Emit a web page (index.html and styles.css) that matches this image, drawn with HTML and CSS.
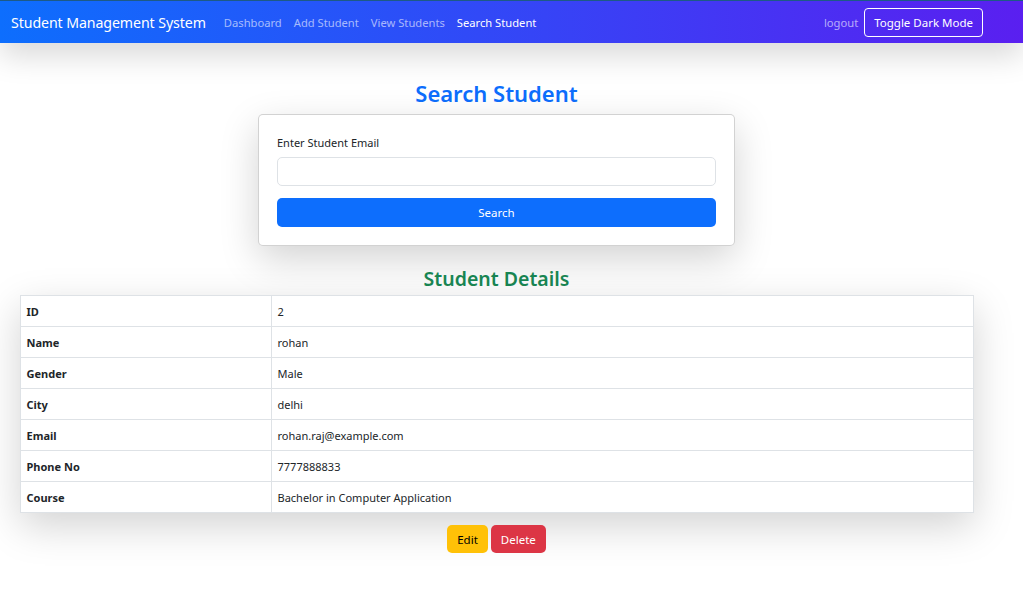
FILE: index.html
```html
<!DOCTYPE html>
<html lang="en">
<head>
<meta charset="utf-8">
<title>Search Student</title>
<link rel="stylesheet" href="styles.css">
</head>
<body>
<nav class="navbar">
  <div class="nav-left">
    <span class="brand">Student Management System</span>
    <ul class="nav-links">
      <li><a class="nav-link">Dashboard</a></li>
      <li><a class="nav-link">Add Student</a></li>
      <li><a class="nav-link">View Students</a></li>
      <li><a class="nav-link active">Search Student</a></li>
    </ul>
  </div>
  <div class="nav-right">
    <a class="nav-link">logout</a>
    <button class="btn-outline">Toggle Dark Mode</button>
  </div>
</nav>
<main class="container">
  <h2 class="title-blue">Search Student</h2>
  <div class="card search-card">
    <label class="label">Enter Student Email</label>
    <div class="input"></div>
    <button class="btn-primary">Search</button>
  </div>
  <h3 class="title-green">Student Details</h3>
  <table class="details">
    <tr><th>ID</th><td>2</td></tr>
    <tr><th>Name</th><td>rohan</td></tr>
    <tr><th>Gender</th><td>Male</td></tr>
    <tr><th>City</th><td>delhi</td></tr>
    <tr><th>Email</th><td>rohan.raj@example.com</td></tr>
    <tr><th>Phone No</th><td>7777888833</td></tr>
    <tr><th>Course</th><td>Bachelor in Computer Application</td></tr>
  </table>
  <div class="actions">
    <button class="btn btn-warning">Edit</button>
    <button class="btn btn-danger">Delete</button>
  </div>
</main>
</body>
</html>
```
FILE: styles.css
```css
* { box-sizing: border-box; }
html, body { min-height: 100%; }
body {
  margin: 0;
  font-family: "Noto Sans", "Open Sans", sans-serif;
  font-size: 11px;
  color: #212529;
  background: #fff;
}
.navbar {
  height: 43px;
  display: flex;
  align-items: center;
  justify-content: space-between;
  padding: 0 40px 0 11px;
  background: linear-gradient(90deg, #0d6efd 0%, #5a1ff0 100%);
  border-top: 1px solid #1d5a86;
  box-shadow: 0 13px 30px rgba(0,0,0,0.15);
  position: relative;
  z-index: 1;
}
.nav-left, .nav-right { display: flex; align-items: center; }
.brand {
  color: #fff;
  font-size: 14.2px;
  margin-right: 12px;
  letter-spacing: -0.1px;
}
.nav-links { list-style: none; margin: 0; padding: 0; display: flex; }
.nav-link {
  color: rgba(255,255,255,0.6);
  font-size: 11.2px;
  padding: 0 6px;
  text-decoration: none;
}
.nav-link.active { color: #fff; }
.nav-right .nav-link { padding: 0 6px 0 0; }
.btn-outline {
  font-family: inherit;
  font-size: 11.5px;
  color: #fff;
  background: transparent;
  border: 1px solid #fff;
  border-radius: 4px;
  height: 29px;
  padding: 0 9px;
}
.container {
  width: 953px;
  margin-left: 20px;
  padding-bottom: 60px;
  display: flex;
  flex-direction: column;
  align-items: center;
}
.title-blue {
  color: #0d6efd;
  font-size: 22px;
  font-weight: 600;
  margin: 34px 0 5px;
  line-height: 32px;
}
.card {
  background: #fff;
  border: 1px solid rgba(0,0,0,0.175);
  border-radius: 5px;
  box-shadow: 0 13px 38px rgba(0,0,0,0.175);
}
.search-card {
  width: 477px;
  padding: 19px 18px 18px;
  display: flex;
  flex-direction: column;
}
.label { font-size: 11px; line-height: 18px; margin-bottom: 5px; }
.input {
  height: 29px;
  border: 1px solid #dee2e6;
  border-radius: 5px;
  margin-bottom: 12px;
}
.btn-primary {
  height: 29px;
  background: #0d6efd;
  color: #fff;
  border: 0;
  border-radius: 5px;
  font-family: inherit;
  font-size: 11.5px;
}
.title-green {
  color: #198754;
  font-size: 19.5px;
  font-weight: 600;
  margin: 19px 0 2px;
  line-height: 28px;
}
.details {
  width: 954px;
  flex-shrink: 0;
  border-collapse: collapse;
  box-shadow: 0 13px 38px rgba(0,0,0,0.175);
  font-size: 11px;
}
.details th, .details td {
  border: 1px solid #dee2e6;
  height: 31px;
  padding: 0 6px;
  text-align: left;
  vertical-align: middle;
}
.details th { width: 251px; font-weight: 700; }
.actions { display: flex; gap: 3px; margin-top: 12px; }
.btn {
  height: 28px;
  border: 0;
  border-radius: 5px;
  font-family: inherit;
  font-size: 11.5px;
  padding: 0 10px;
}
.btn-warning { background: #ffc107; color: #000; }
.btn-danger { background: #dc3545; color: #fff; }
```
